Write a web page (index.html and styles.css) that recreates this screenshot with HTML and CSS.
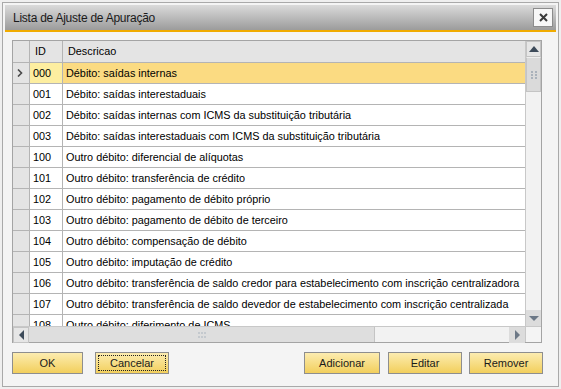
FILE: index.html
```html
<!DOCTYPE html>
<html lang="pt">

<head>
    <meta charset="UTF-8">
    <title>Lista de Ajuste de Apuração</title>
    <link rel="stylesheet" href="styles.css">
</head>

<body>
    <div class="window">
        <div class="titlebar">
            <span class="title">Lista de Ajuste de Apuração</span>
            <div class="close-btn">
                <svg width="9" height="9" viewBox="0 0 9 9">
                    <path d="M1 1 L8 8 M8 1 L1 8" stroke="#3a3a3a" stroke-width="2" />
                </svg>
            </div>
        </div>

        <div class="content">
            <div class="grid">
                <div class="grid-main">
                    <div class="table-area">
                        <div class="row header">
                            <div class="sel"></div>
                            <div class="id">ID</div>
                            <div class="desc">Descricao</div>
                        </div>
                        <div class="row selected">
                            <div class="sel">
                                <svg width="6" height="8" viewBox="0 0 6 8">
                                    <path d="M1 0.5 L4.5 4 L1 7.5" stroke="#4a4a4a" stroke-width="1.6" fill="none" />
                                </svg>
                            </div>
                            <div class="id">000</div>
                            <div class="desc">Débito: saídas internas</div>
                        </div>
                        <div class="row">
                            <div class="sel"></div>
                            <div class="id">001</div>
                            <div class="desc">Débito: saídas interestaduais</div>
                        </div>
                        <div class="row">
                            <div class="sel"></div>
                            <div class="id">002</div>
                            <div class="desc">Débito: saídas internas com ICMS da substituição tributária</div>
                        </div>
                        <div class="row">
                            <div class="sel"></div>
                            <div class="id">003</div>
                            <div class="desc">Débito: saídas interestaduais com ICMS da substituição tributária</div>
                        </div>
                        <div class="row">
                            <div class="sel"></div>
                            <div class="id">100</div>
                            <div class="desc">Outro débito: diferencial de alíquotas</div>
                        </div>
                        <div class="row">
                            <div class="sel"></div>
                            <div class="id">101</div>
                            <div class="desc">Outro débito: transferência de crédito</div>
                        </div>
                        <div class="row">
                            <div class="sel"></div>
                            <div class="id">102</div>
                            <div class="desc">Outro débito: pagamento de débito próprio</div>
                        </div>
                        <div class="row">
                            <div class="sel"></div>
                            <div class="id">103</div>
                            <div class="desc">Outro débito: pagamento de débito de terceiro</div>
                        </div>
                        <div class="row">
                            <div class="sel"></div>
                            <div class="id">104</div>
                            <div class="desc">Outro débito: compensação de débito</div>
                        </div>
                        <div class="row">
                            <div class="sel"></div>
                            <div class="id">105</div>
                            <div class="desc">Outro débito: imputação de crédito</div>
                        </div>
                        <div class="row">
                            <div class="sel"></div>
                            <div class="id">106</div>
                            <div class="desc">Outro débito: transferência de saldo credor para estabelecimento com inscrição centralizadora</div>
                        </div>
                        <div class="row">
                            <div class="sel"></div>
                            <div class="id">107</div>
                            <div class="desc">Outro débito: transferência de saldo devedor de estabelecimento com inscrição centralizada</div>
                        </div>
                        <div class="row">
                            <div class="sel"></div>
                            <div class="id">108</div>
                            <div class="desc">Outro débito: diferimento de ICMS</div>
                        </div>
                    </div>

                    <div class="vscroll">
                        <div class="sb-btn">
                            <svg width="10" height="6" viewBox="0 0 10 6"><path d="M0 6 L5 0 L10 6 Z" fill="#3d4b5a" /></svg>
                        </div>
                        <div class="vthumb">
                            <svg width="6" height="8" viewBox="0 0 6 8">
                                <rect x="0" y="0" width="2" height="2" fill="#aab2bb" />
                                <rect x="4" y="0" width="2" height="2" fill="#aab2bb" />
                                <rect x="0" y="3" width="2" height="2" fill="#aab2bb" />
                                <rect x="4" y="3" width="2" height="2" fill="#aab2bb" />
                                <rect x="0" y="6" width="2" height="2" fill="#aab2bb" />
                                <rect x="4" y="6" width="2" height="2" fill="#aab2bb" />
                            </svg>
                        </div>
                        <div class="vtrack"></div>
                        <div class="sb-btn dark">
                            <svg width="10" height="5" viewBox="0 0 10 5"><path d="M0 0 L10 0 L5 5 Z" fill="#6c7886" /></svg>
                        </div>
                    </div>
                </div>

                <div class="hscroll-row">
                    <div class="hscroll">
                        <div class="sb-btn">
                            <svg width="5" height="10" viewBox="0 0 5 10"><path d="M5 0 L5 10 L0 5 Z" fill="#3d4b5a" /></svg>
                        </div>
                        <div class="hthumb">
                            <svg width="8" height="6" viewBox="0 0 8 6">
                                <rect x="0" y="0" width="2" height="2" fill="#c4c9ce" />
                                <rect x="3" y="0" width="2" height="2" fill="#c4c9ce" />
                                <rect x="6" y="0" width="2" height="2" fill="#c4c9ce" />
                                <rect x="0" y="4" width="2" height="2" fill="#c4c9ce" />
                                <rect x="3" y="4" width="2" height="2" fill="#c4c9ce" />
                                <rect x="6" y="4" width="2" height="2" fill="#c4c9ce" />
                            </svg>
                        </div>
                        <div class="htrack"></div>
                        <div class="sb-btn dark">
                            <svg width="5" height="10" viewBox="0 0 5 10"><path d="M0 0 L5 5 L0 10 Z" fill="#6c7886" /></svg>
                        </div>
                    </div>
                    <div class="corner"></div>
                </div>
            </div>

            <div class="buttons">
                <div class="btn-group">
                    <button class="btn btn-ok">OK</button>
                    <button class="btn btn-cancel"><span class="focus">Cancelar</span></button>
                </div>
                <div class="btn-group right">
                    <button class="btn btn-add">Adicionar</button>
                    <button class="btn btn-edit">Editar</button>
                    <button class="btn btn-remove">Remover</button>
                </div>
            </div>
        </div>
    </div>
</body>

</html>
```

FILE: styles.css
```css
* {
    box-sizing: border-box;
}

body {
    margin: 0;
    background-color: #efefef;
    font-family: "Liberation Sans", Arial, sans-serif;
    font-size: 10.85px;
    color: #000;
}

.window {
    margin: 2px;
    width: 557px;
    height: 385px;
    border: 1px solid #a9a9a9;
    padding: 2px;
    background-color: #f4f4f4;
}

.titlebar {
    height: 27px;
    display: flex;
    align-items: center;
    justify-content: space-between;
    padding: 0 3px 0 8px;
    background: linear-gradient(#dadada, #9c9c9c);
    border-bottom: 2px solid #f0ab00;
}

.title {
    font-size: 12px;
    letter-spacing: -0.25px;
    color: #1a1a1a;
}

.close-btn {
    width: 20px;
    height: 19px;
    display: flex;
    align-items: center;
    justify-content: center;
    background-color: #f7f7f7;
    border: 1px solid #8c8c8c;
    margin-bottom: 1px;
}

.content {
    padding: 8px 0 0 7px;
}

/* grid */
.grid {
    width: 530px;
    border: 1px solid #a4a4a4;
    background-color: #fff;
}

.grid-main {
    display: flex;
    height: 285px;
}

.table-area {
    width: 512px;
    overflow: hidden;
}

.row {
    display: flex;
    height: 21px;
    border-bottom: 1px solid #b4b4b4;
    white-space: nowrap;
}

.row .sel {
    width: 17px;
    flex: none;
    background-color: #e4e4e4;
    border-right: 1px solid #b4b4b4;
    display: flex;
    align-items: center;
    padding-left: 4px;
}

.row .id {
    width: 33px;
    flex: none;
    border-right: 1px solid #b4b4b4;
    padding: 4px 0 0 3px;
}

.row .desc {
    flex: 1;
    padding: 4px 0 0 3px;
    overflow: hidden;
}

.row.header {
    height: 22px;
    background-color: #e4e4e4;
}

.row.header .id {
    padding-left: 5px;
}

.row.header .desc {
    padding-left: 5px;
}

.row.selected .id {
    background-color: #fdeea0;
}

.row.selected .desc {
    background-color: #fbdb82;
}

/* scrollbars */
.vscroll {
    width: 16px;
    display: flex;
    flex-direction: column;
    background-color: #f2f2f2;
    border-left: 1px solid #c8c8c8;
}

.sb-btn {
    width: 16px;
    height: 16px;
    flex: none;
    display: flex;
    align-items: center;
    justify-content: center;
    background-color: #e6e6e6;
    border: 1px solid #fafafa;
    outline: 1px solid #c4c4c4;
    outline-offset: -1px;
}

.sb-btn.dark {
    background-color: #dcdcdc;
    border: none;
    outline: none;
}

.vscroll .sb-btn {
    width: 15px;
}

.vthumb {
    height: 35px;
    display: flex;
    align-items: center;
    justify-content: center;
    background-color: #dadada;
    border: 1px solid #c4c4c4;
    border-top: 1px solid #eee;
}

.vtrack {
    flex: 1;
}

.hscroll-row {
    display: flex;
    height: 16px;
    border-top: 1px solid #c8c8c8;
}

.hscroll {
    width: 512px;
    display: flex;
    background-color: #f2f2f2;
}

.hthumb {
    width: 346px;
    display: flex;
    align-items: center;
    justify-content: center;
    background-color: #dedede;
    border-right: 1px solid #c4c4c4;
}

.htrack {
    flex: 1;
}

.corner {
    flex: 1;
    background-color: #f4f4f4;
    border-left: 1px solid #c8c8c8;
}

/* buttons */
.buttons {
    display: flex;
    justify-content: space-between;
    width: 531px;
    margin-top: 9px;
}

.btn-group {
    display: flex;
    gap: 12px;
}

.btn-group.right {
    gap: 8px;
}

.btn {
    height: 22px;
    font-family: "Liberation Sans", Arial, sans-serif;
    font-size: 11px;
    color: #1a1a1a;
    border: 1px solid #8e8e8e;
    background: linear-gradient(#fcecb0, #f2cf5c);
    padding: 0;
}

.btn-ok {
    width: 71px;
}

.btn-cancel {
    width: 74px;
    padding: 2px;
}

.btn-cancel .focus {
    display: block;
    height: 100%;
    border: 1px dotted #222;
    line-height: 14px;
}

.btn-add {
    width: 76px;
}

.btn-edit {
    width: 74px;
}

.btn-remove {
    width: 74px;
    margin-left: -1px;
}
```
